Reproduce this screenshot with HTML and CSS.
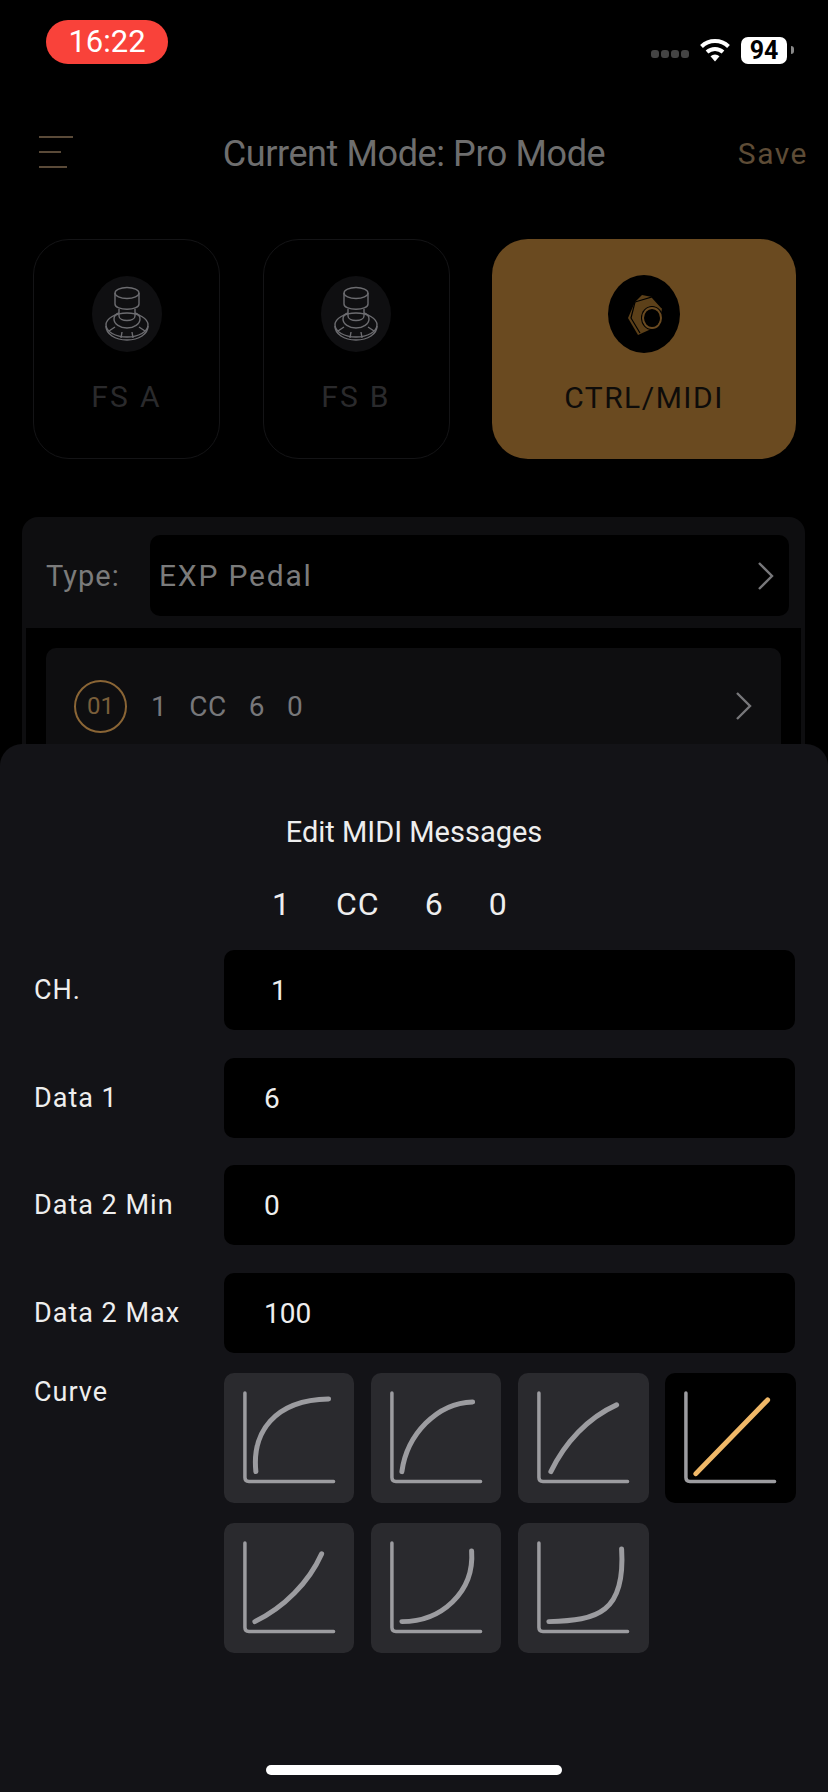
FILE: index.html
```html
<!DOCTYPE html>
<html lang="en">
<head>
  <meta charset="UTF-8" />
  <title>Edit MIDI Messages</title>
  <link rel="stylesheet" href="styles.css">
</head>
<body>
  <div class="phone">

    <div class="status">
      <div class="time-pill">16:22</div>
      <div class="status-right">
        <div class="signal"><i></i><i></i><i></i><i></i></div>
        <svg class="wifi" width="32" height="24" viewBox="0 0 32 24">
          <path d="M2.5 8.5a19.5 19.5 0 0 1 27 0" fill="none" stroke="#fff" stroke-width="4"/>
          <path d="M8 14a12 12 0 0 1 16 0" fill="none" stroke="#fff" stroke-width="4"/>
          <path d="M11.5 18.2a7 7 0 0 1 9 0L16 23.5z" fill="#fff"/>
        </svg>
        <div class="battery">94</div>
        <div class="battery-nub"></div>
      </div>
    </div>

    <header class="nav">
      <div class="menu"><i></i><i></i><i></i></div>
      <div class="nav-title">Current Mode: Pro Mode</div>
      <div class="nav-save">Save</div>
    </header>

    <div class="tabs">
      <div class="tab">
        <div class="tab-icon">
          <svg width="70" height="76" viewBox="0 0 70 76" fill="none" stroke="#6c6c70" stroke-width="1.4">
            <ellipse cx="35" cy="17" rx="12" ry="5.5"/>
            <path d="M23 17v11c0 7 24 7 24 0V17"/>
            <path d="M27 33v7c0 6 16 6 16 0v-7"/>
            <path d="M27 37c-3 1-5 3-5 6 0 5 6 9 13 9s13-4 13-9c0-3-2-5-5-6"/>
            <ellipse cx="35" cy="49" rx="21" ry="12"/>
            <path d="M14 50c0 8 9 14 21 14s21-6 21-14"/>
            <path d="M17 55l6-4M53 55l-6-4M29 62l1-6M41 62l-1-6"/>
          </svg>
        </div>
        <div class="tab-label">FS A</div>
      </div>
      <div class="tab">
        <div class="tab-icon">
          <svg width="70" height="76" viewBox="0 0 70 76" fill="none" stroke="#6c6c70" stroke-width="1.4">
            <ellipse cx="35" cy="17" rx="12" ry="5.5"/>
            <path d="M23 17v11c0 7 24 7 24 0V17"/>
            <path d="M27 33v7c0 6 16 6 16 0v-7"/>
            <path d="M27 37c-3 1-5 3-5 6 0 5 6 9 13 9s13-4 13-9c0-3-2-5-5-6"/>
            <ellipse cx="35" cy="49" rx="21" ry="12"/>
            <path d="M14 50c0 8 9 14 21 14s21-6 21-14"/>
            <path d="M17 55l6-4M53 55l-6-4M29 62l1-6M41 62l-1-6"/>
          </svg>
        </div>
        <div class="tab-label">FS B</div>
      </div>
      <div class="tab active">
        <div class="tab-icon">
          <svg width="72" height="78" viewBox="0 0 72 78">
            <path d="M34 20l10 2 10 11-2 17-22 10-10-17 7-16z" fill="#5c4019"/>
            <path d="M27 27l17-5 10 11M27 27l-4 16 9 15" fill="none" stroke="#000" stroke-width="1.2"/>
            <ellipse cx="44" cy="43" rx="11" ry="12" fill="#000"/>
            <ellipse cx="44" cy="43" rx="9" ry="10" fill="none" stroke="#6a4a20" stroke-width="2"/>
            <ellipse cx="45" cy="44" rx="6.5" ry="7.5" fill="#000"/>
          </svg>
        </div>
        <div class="tab-label">CTRL/MIDI</div>
      </div>
    </div>

    <section class="panel">
      <div class="type-row">
        <div class="type-label">Type:</div>
        <div class="type-value">
          <span>EXP Pedal</span>
          <svg class="chevron" width="18" height="28" viewBox="0 0 18 28"><path d="M2 1l13 13L2 27" fill="none" stroke="#77777a" stroke-width="2.4"/></svg>
        </div>
      </div>
      <div class="msg-list">
        <div class="msg-row">
          <div class="msg-num">01</div>
          <div class="msg-parts"><span>1</span><span>CC</span><span>6</span><span>0</span></div>
          <svg class="chevron" width="18" height="28" viewBox="0 0 18 28"><path d="M2 1l13 13L2 27" fill="none" stroke="#77777a" stroke-width="2.4"/></svg>
        </div>
      </div>
    </section>

    <div class="sheet">
      <h2 class="sheet-title">Edit MIDI Messages</h2>
      <div class="sheet-msg"><span>1</span><span>CC</span><span>6</span><span>0</span></div>

      <div class="field">
        <label>CH.</label>
        <div class="field-input">&nbsp;1</div>
      </div>
      <div class="field">
        <label>Data 1</label>
        <div class="field-input">6</div>
      </div>
      <div class="field">
        <label>Data 2 Min</label>
        <div class="field-input">0</div>
      </div>
      <div class="field">
        <label>Data 2 Max</label>
        <div class="field-input">100</div>
      </div>

      <div class="curve-row">
        <label>Curve</label>
        <div class="curves">
          <div class="curve"><svg viewBox="0 0 131 131"><path class="axis" d="M21 20v85q0 4 4 4h85"/><path class="line" d="M32 99C28 60 50 27 105 26"/></svg></div>
          <div class="curve"><svg viewBox="0 0 131 131"><path class="axis" d="M21 20v85q0 4 4 4h85"/><path class="line" d="M31 99C36 62 66 30 102 29"/></svg></div>
          <div class="curve"><svg viewBox="0 0 131 131"><path class="axis" d="M21 20v85q0 4 4 4h85"/><path class="line" d="M33 99C47 70 70 45 99 32"/></svg></div>
          <div class="curve selected"><svg viewBox="0 0 131 131"><path class="axis" d="M21 20v85q0 4 4 4h85"/><path class="line" d="M31 101L103 27"/></svg></div>
          <div class="curve"><svg viewBox="0 0 131 131"><path class="axis" d="M21 20v85q0 4 4 4h85"/><path class="line" d="M31 99C60 85 85 60 98 31"/></svg></div>
          <div class="curve"><svg viewBox="0 0 131 131"><path class="axis" d="M21 20v85q0 4 4 4h85"/><path class="line" d="M31 99C70 99 104 70 101 28"/></svg></div>
          <div class="curve"><svg viewBox="0 0 131 131"><path class="axis" d="M21 20v85q0 4 4 4h85"/><path class="line" d="M31 99C80 98 108 90 104 26"/></svg></div>
        </div>
      </div>

      <div class="home-bar"></div>
    </div>

  </div>
</body>
</html>
```

FILE: styles.css
```css
* {
  margin: 0;
  padding: 0;
  box-sizing: border-box;
  font-family: Roboto, "Liberation Sans", sans-serif;
}

body {
  background: #000;
}

.phone {
  position: relative;
  width: 828px;
  height: 1792px;
  overflow: hidden;
  background: #000;
}

/* status bar */
.status {
  display: flex;
  justify-content: space-between;
  height: 119px;
  padding: 20px 34px 0 46px;
}

.time-pill {
  width: 122px;
  height: 44px;
  border-radius: 22px;
  background: #f9423a;
  color: #fff;
  font-size: 31px;
  line-height: 44px;
  text-align: center;
}

.status-right {
  display: flex;
  align-items: center;
  height: 28px;
  margin-top: 16px;
}

.signal {
  display: flex;
  gap: 2px;
  margin: 8px 10px 0 0;
}

.signal i {
  width: 8px;
  height: 8px;
  border-radius: 3px;
  background: #444;
}

.wifi {
  margin-right: 10px;
}

.battery {
  width: 46px;
  height: 27px;
  border-radius: 7px;
  background: #fff;
  color: #000;
  font-size: 25px;
  font-weight: 700;
  line-height: 27px;
  text-align: center;
}

.battery-nub {
  width: 3px;
  height: 8px;
  margin-left: 4px;
  border-radius: 0 3px 3px 0;
  background: #888;
}

/* header */
.nav {
  display: grid;
  grid-template-columns: 1fr auto 1fr;
  align-items: center;
  height: 66px;
  padding: 0 20px;
  margin-bottom: 54px;
}

.menu {
  display: flex;
  flex-direction: column;
  gap: 13px;
  margin-left: 19px;
}

.menu i {
  display: block;
  height: 2px;
  background: #5a4a38;
}

.menu i:nth-child(1) { width: 34px; }
.menu i:nth-child(2) { width: 22px; }
.menu i:nth-child(3) { width: 28px; }

.nav-title {
  padding-top: 4px;
  color: #6e6e6e;
  font-size: 36px;
  letter-spacing: -0.4px;
}

.nav-save {
  padding-top: 3px;
  color: #5e4c36;
  font-size: 30px;
  letter-spacing: 1.5px;
  text-align: right;
}

/* tabs */
.tabs {
  display: flex;
  gap: 42.5px;
  height: 220px;
  padding-left: 33px;
}

.tab {
  display: flex;
  flex-direction: column;
  align-items: center;
  width: 187px;
  padding-top: 36px;
  border: 1px solid #141416;
  border-radius: 36px;
}

.tab.active {
  width: 304px;
  border: none;
  background: #6a4a20;
}

.tab-icon {
  width: 70px;
  height: 76px;
  border-radius: 50%;
  background: #0f0f11;
}

.tab.active .tab-icon {
  width: 72px;
  height: 78px;
  background: #000;
}

.tab-label {
  margin-top: 27px;
  color: #2a2a2c;
  font-size: 30px;
  letter-spacing: 2.3px;
}

.tab.active .tab-label {
  color: #0e0c0a;
  letter-spacing: 1.5px;
}

/* background panel */
.panel {
  width: 783px;
  margin: 58px 0 0 22px;
  border-radius: 16px 16px 0 0;
  background: #0e0e10;
  padding: 0 4px;
}

.type-row {
  display: flex;
  align-items: center;
  height: 111px;
  padding: 6px 12px 0 20px;
}

.type-label {
  width: 104px;
  color: #7b7b7b;
  font-size: 29px;
  letter-spacing: 1px;
}

.type-value {
  display: flex;
  align-items: center;
  justify-content: space-between;
  flex: 1;
  height: 81px;
  padding: 0 14px 0 9px;
  border-radius: 10px;
  background: #000;
  color: #7b7b7b;
  font-size: 30px;
  letter-spacing: 1.8px;
}

.msg-list {
  height: 200px;
  padding: 20px 20px 0;
  background: #000;
}

.msg-row {
  display: flex;
  align-items: center;
  height: 120px;
  padding: 0 28px 4px 28px;
  border-radius: 10px;
  background: #0e0e10;
}

.msg-num {
  width: 53px;
  height: 53px;
  margin-right: 24px;
  border: 2px solid #8a6535;
  border-radius: 50%;
  color: #7a5e3a;
  font-size: 24px;
  line-height: 49px;
  text-align: center;
}

.msg-parts {
  display: flex;
  flex: 1;
  gap: 22px;
  color: #77777a;
  font-size: 28px;
  letter-spacing: 0.5px;
}

/* bottom sheet lies over the page */
.sheet {
  position: absolute;
  left: 0;
  right: 0;
  top: 744px;
  bottom: 0;
  padding-top: 65px;
  border-radius: 22px 22px 0 0;
  background: #131317;
  color: #eee;
}

.sheet-title {
  height: 46px;
  font-size: 29px;
  font-weight: 400;
  line-height: 46px;
  text-align: center;
}

.sheet-msg {
  display: flex;
  gap: 45px;
  height: 40px;
  margin-top: 29px;
  padding-left: 272px;
  font-size: 32px;
  letter-spacing: 1px;
  line-height: 40px;
}

.field {
  display: grid;
  grid-template-columns: 190px 571px;
  align-items: center;
  margin: 0 0 27.5px 34px;
}

.sheet-msg + .field {
  margin-top: 26px;
}

label {
  color: #eee;
  font-size: 27px;
  letter-spacing: 1px;
}

.field-input {
  height: 80px;
  padding-left: 40px;
  border-radius: 10px;
  background: #000;
  font-size: 28px;
  line-height: 81px;
}

.curve-row {
  display: grid;
  grid-template-columns: 189.5px 572px;
  margin: -7.5px 0 0 34px;
}

.curve-row label {
  line-height: 38px;
}

.curves {
  display: grid;
  grid-template-columns: repeat(4, 130.5px);
  grid-auto-rows: 130.5px;
  column-gap: 16.8px;
  row-gap: 19.5px;
}

.curve {
  border-radius: 10px;
  background: #2a2a2e;
}

.curve svg {
  display: block;
  width: 100%;
  height: 100%;
}

.axis,
.line {
  fill: none;
  stroke-linecap: round;
}

.axis {
  stroke: #9c9ca0;
  stroke-width: 3.5;
}

.line {
  stroke: #9c9ca0;
  stroke-width: 5;
}

.curve.selected {
  background: #000;
}

.curve.selected .line {
  stroke: #f0b868;
}

.home-bar {
  position: absolute;
  left: 266px;
  bottom: 17px;
  width: 296px;
  height: 10px;
  border-radius: 5px;
  background: #fff;
}
```
